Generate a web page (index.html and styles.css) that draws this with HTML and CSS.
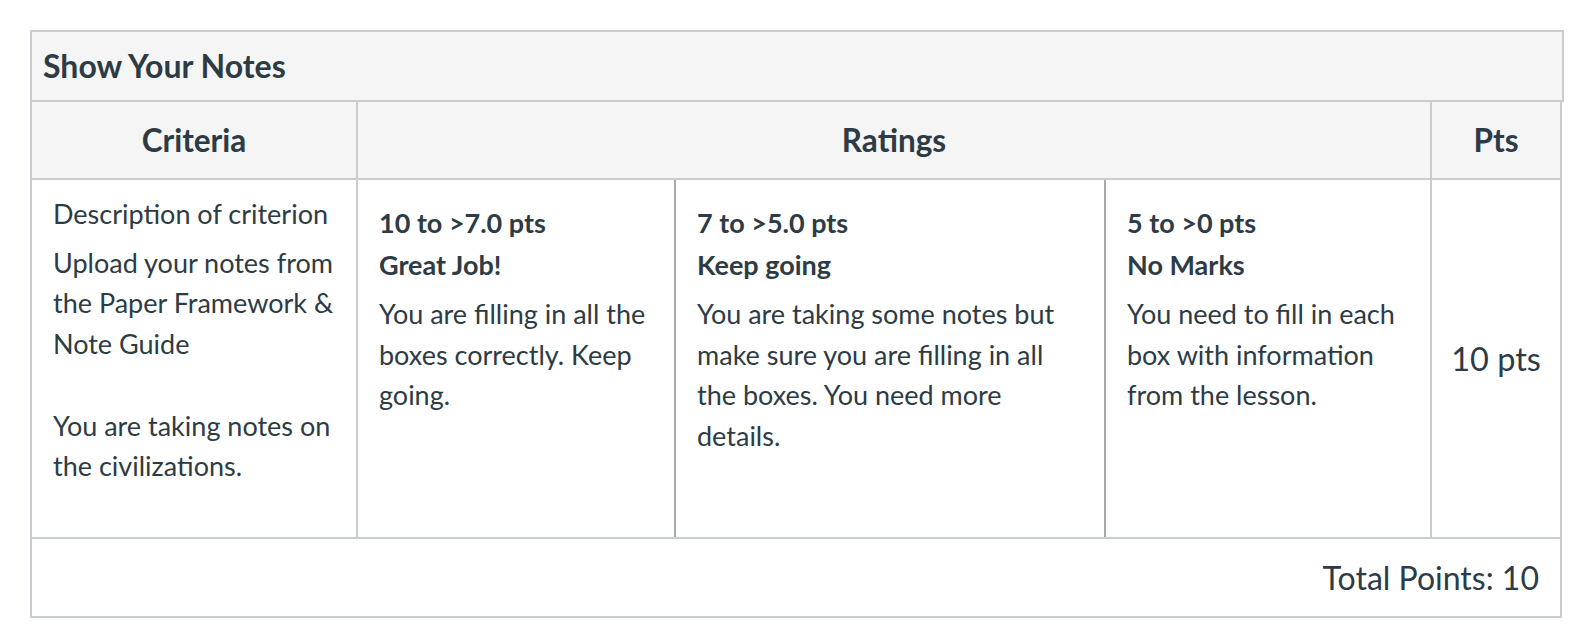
FILE: index.html
```html
<!DOCTYPE html>
<html lang="en">
<head>
<meta charset="utf-8">
<title>Show Your Notes</title>
<link rel="stylesheet" href="styles.css">
</head>
<body>
<div class="rubric">
  <div class="rubric-title">Show Your Notes</div>
  <div class="rubric-table">
    <div class="row head">
      <div class="cell col-crit">Criteria</div>
      <div class="cell col-ratings">Ratings</div>
      <div class="cell col-pts">Pts</div>
    </div>
    <div class="row body">
      <div class="cell col-crit crit">
        <div class="crit-label">Description of criterion</div>
        <div class="crit-desc">Upload your notes from the Paper Framework &amp; Note Guide<br><br>You are taking notes on the civilizations.</div>
      </div>
      <div class="cell col-ratings ratings">
        <div class="rating r1">
          <div class="rating-pts">10 to &gt;7.0 pts</div>
          <div class="rating-name">Great Job!</div>
          <div class="rating-desc">You are filling in all the boxes correctly. Keep going.</div>
        </div>
        <div class="rating r2">
          <div class="rating-pts">7 to &gt;5.0 pts</div>
          <div class="rating-name">Keep going</div>
          <div class="rating-desc">You are taking some notes but make sure you are filling in all the boxes. You need more details.</div>
        </div>
        <div class="rating r3">
          <div class="rating-pts">5 to &gt;0 pts</div>
          <div class="rating-name">No Marks</div>
          <div class="rating-desc">You need to fill in each box with information from the lesson.</div>
        </div>
      </div>
      <div class="cell col-pts pts">10 pts</div>
    </div>
    <div class="foot">Total Points: 10</div>
  </div>
</div>
</body>
</html>
```

FILE: styles.css
```css
html, body {
  margin: 0;
  padding: 0;
  background: #ffffff;
}

body {
  font-family: Lato, "Liberation Sans", sans-serif;
  color: #2d3b45;
}

.rubric {
  margin: 30px 0 0 30px;
  width: 1534px;
}

.rubric-title {
  box-sizing: border-box;
  width: 1534px;
  height: 72px;
  border: 2px solid #c7cdd1;
  background: #f5f5f5;
  font-weight: 700;
  font-size: 32px;
  padding: 0 0 2px 11px;
  display: flex;
  align-items: center;
}

.rubric-table {
  box-sizing: border-box;
  width: 1532px;
  border: 2px solid #c7cdd1;
  border-top: none;
}

.row {
  display: flex;
  box-sizing: border-box;
  border-bottom: 2px solid #c7cdd1;
}

.cell {
  box-sizing: border-box;
}

.col-crit {
  width: 326px;
  border-right: 2px solid #c7cdd1;
  flex: none;
}

.col-ratings {
  width: 1074px;
  border-right: 2px solid #c7cdd1;
  flex: none;
}

.col-pts {
  flex: 1;
}

.head {
  height: 78px;
  background: #f5f5f5;
}

.head .cell {
  display: flex;
  align-items: center;
  justify-content: center;
  font-weight: 700;
  font-size: 31.5px;
  padding-bottom: 1px;
}

.body {
  height: 359px;
}

.crit {
  padding: 14px 10px 0 21px;
  font-size: 27px;
  line-height: 40.7px;
}

.crit-desc {
  margin-top: 8px;
}

.ratings {
  display: flex;
}

.rating {
  box-sizing: border-box;
  padding-top: 23px;
  padding-left: 21px;
  font-size: 27px;
  line-height: 40.5px;
}

.rating + .rating {
  border-left: 2px solid #a7a9ab;
}

.r1 {
  width: 316px;
  padding-right: 12px;
}

.r2 {
  width: 430px;
  padding-right: 31px;
}

.r3 {
  flex: 1;
  padding-right: 14px;
}

.rating-pts,
.rating-name {
  font-weight: 700;
}

.rating-name {
  margin-top: 1px;
}

.rating-desc {
  margin-top: 9px;
}

.pts {
  display: flex;
  align-items: center;
  justify-content: center;
  font-size: 32.5px;
  padding-bottom: 1px;
}

.foot {
  box-sizing: border-box;
  height: 77px;
  display: flex;
  align-items: center;
  justify-content: flex-end;
  padding-right: 21px;
  font-size: 32px;
}
```
